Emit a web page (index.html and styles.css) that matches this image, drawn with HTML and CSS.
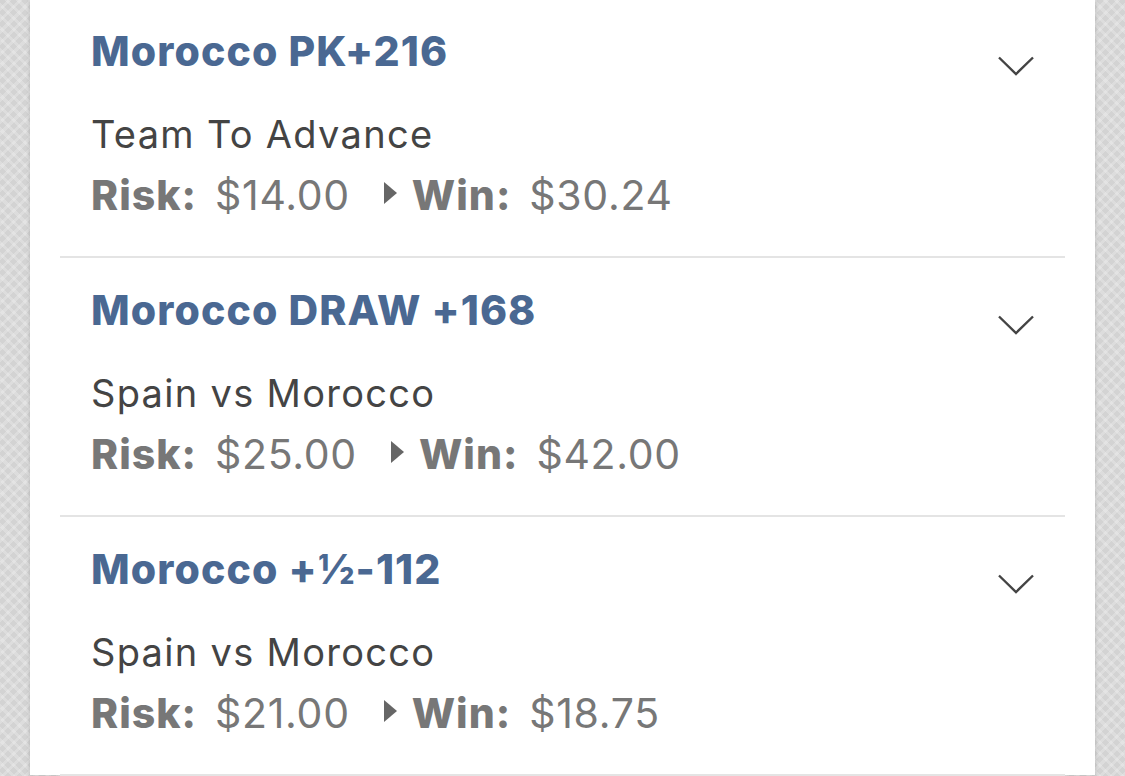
FILE: index.html
```html
<!DOCTYPE html>
<html lang="en">
<head>
<meta charset="utf-8">
<title>Bets</title>
<link rel="stylesheet" href="styles.css">
</head>
<body>
<div class="page">
  <div class="card">
    <div class="bet">
      <div class="bet-head">
        <div class="bet-title">Morocco PK+216</div>
        <svg class="chev" width="36" height="20" viewBox="0 0 36 20"><path d="M1 1.5 L18 18 L35 1.5" fill="none" stroke="#444" stroke-width="2.4"/></svg>
      </div>
      <div class="bet-sub">Team To Advance</div>
      <div class="bet-amounts">
        <span class="lbl">Risk:</span><span class="val">$14.00</span>
        <span class="tri"></span>
        <span class="lbl">Win:</span><span class="val">$30.24</span>
      </div>
    </div>
    <div class="bet">
      <div class="bet-head">
        <div class="bet-title">Morocco DRAW +168</div>
        <svg class="chev" width="36" height="20" viewBox="0 0 36 20"><path d="M1 1.5 L18 18 L35 1.5" fill="none" stroke="#444" stroke-width="2.4"/></svg>
      </div>
      <div class="bet-sub">Spain vs Morocco</div>
      <div class="bet-amounts">
        <span class="lbl">Risk:</span><span class="val">$25.00</span>
        <span class="tri"></span>
        <span class="lbl">Win:</span><span class="val">$42.00</span>
      </div>
    </div>
    <div class="bet">
      <div class="bet-head">
        <div class="bet-title">Morocco +½-112</div>
        <svg class="chev" width="36" height="20" viewBox="0 0 36 20"><path d="M1 1.5 L18 18 L35 1.5" fill="none" stroke="#444" stroke-width="2.4"/></svg>
      </div>
      <div class="bet-sub">Spain vs Morocco</div>
      <div class="bet-amounts">
        <span class="lbl">Risk:</span><span class="val">$21.00</span>
        <span class="tri"></span>
        <span class="lbl">Win:</span><span class="val">$18.75</span>
      </div>
    </div>
  </div>
</div>
</body>
</html>
```
FILE: styles.css
```css
html, body {
  margin: 0;
  padding: 0;
  height: 100%;
  overflow: hidden;
}
body {
  font-family: Inter, "Noto Sans", "Liberation Sans", sans-serif;
  background-color: #d3d3d3;
  background-image:
    repeating-linear-gradient(45deg, rgba(255,255,255,0.22) 0 3px, rgba(255,255,255,0) 3px 8px),
    repeating-linear-gradient(-45deg, rgba(255,255,255,0.22) 0 3px, rgba(255,255,255,0) 3px 8px);
}
.page {
  padding: 0 30px;
  height: 100%;
}
.card {
  background: #fff;
  height: 100%;
  margin-top: -1px;
  box-shadow: 0 0 4px rgba(0,0,0,0.18);
}
.bet {
  margin: 0 30px;
  padding: 28px 31px 37px 31px;
  border-bottom: 2px solid #e4e4e4;
}
.bet-head {
  display: flex;
  justify-content: space-between;
  align-items: flex-start;
}
.bet-title {
  font-size: 41px;
  line-height: 48px;
  font-weight: 800;
  color: #4a6892;
  letter-spacing: 1.1px;
}
.chev {
  margin-top: 29px;
  display: block;
}
.bet-sub {
  margin-top: 36px;
  font-size: 38px;
  line-height: 44px;
  color: #444;
  letter-spacing: 1.3px;
}
.bet-amounts {
  margin-top: 15px;
  display: flex;
  align-items: center;
  font-size: 41px;
  line-height: 48px;
  color: #777;
  letter-spacing: 0.7px;
}
.lbl {
  font-weight: 800;
  margin-right: 18px;
  letter-spacing: 1px;
}
.val {
  font-weight: 400;
}
.tri {
  width: 0;
  height: 0;
  border-top: 11px solid transparent;
  border-bottom: 11px solid transparent;
  border-left: 13px solid #666;
  margin: -4px 15px 0 34px;
}
```
